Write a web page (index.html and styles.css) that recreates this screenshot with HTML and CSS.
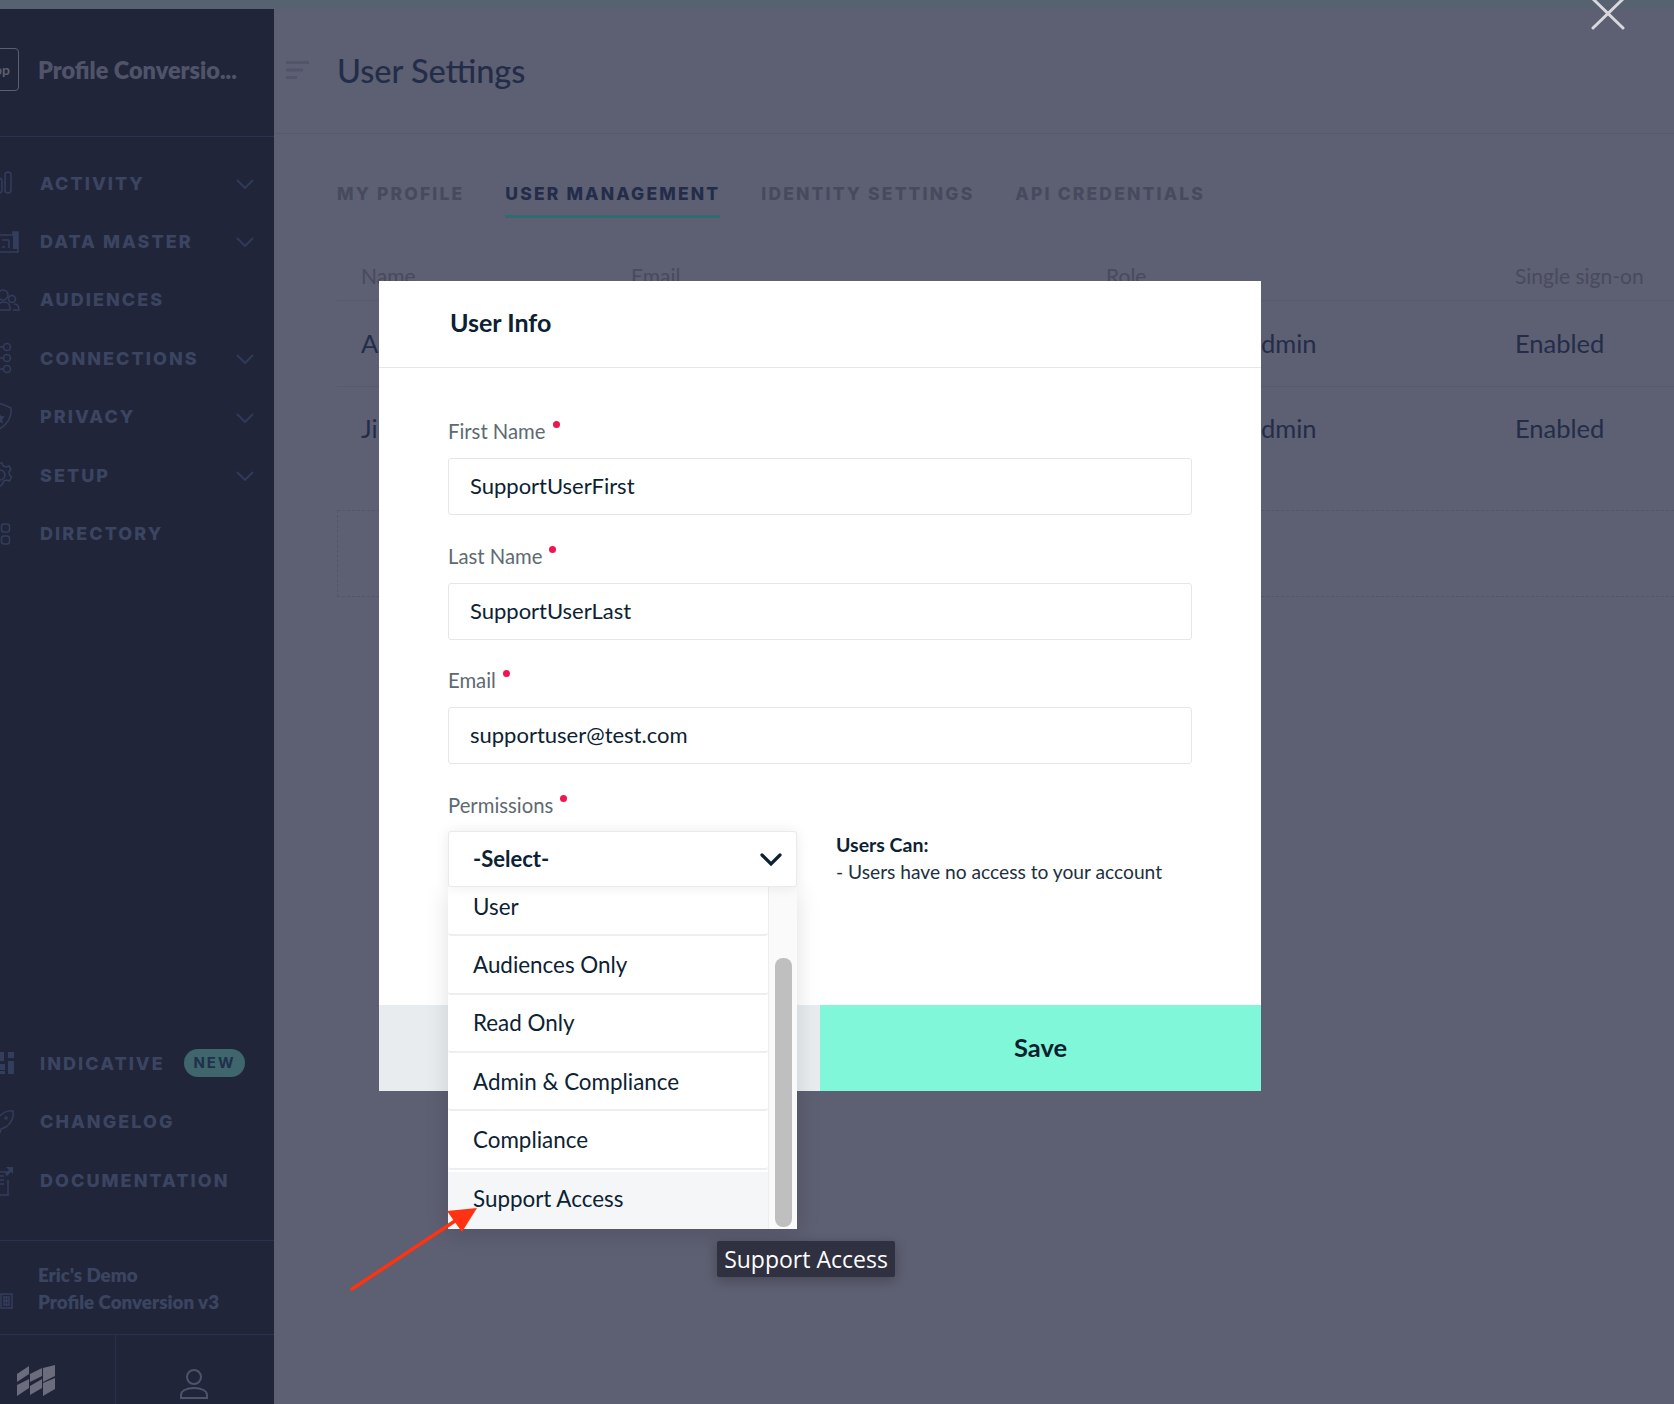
FILE: index.html
```html
<!DOCTYPE html>
<html lang="en">
<head>
<meta charset="utf-8">
<title>User Settings</title>
<link rel="stylesheet" href="styles.css">
</head>
<body>
<div class="strip"></div>
<div class="app">
  <aside class="sidebar">
    <div class="side-head">
      <div class="app-badge">pp</div>
      <div class="app-name">Profile Conversio...</div>
    </div>
    <nav class="nav">
      <div class="nav-item"><span class="ico"><svg width="20" height="24" viewBox="0 0 20 24"><rect x="-4" y="7" width="6" height="15" rx="3"/><rect x="5" y="1" width="6" height="21" rx="3"/></svg></span><span class="nav-label">ACTIVITY</span><svg class="chev" width="18" height="10" viewBox="0 0 18 10"><path d="M1 1l8 8 8-8"/></svg></div>
      <div class="nav-item"><span class="ico"><svg width="20" height="24" viewBox="0 0 20 24"><path d="M-2 5h15V2h5v20H-2z"/><path d="M2 10h7M9 10v6M2 17h3M8 17h2"/><path class="solid" d="M13 2h5v17h-5z"/></svg></span><span class="nav-label">DATA MASTER</span><svg class="chev" width="18" height="10" viewBox="0 0 18 10"><path d="M1 1l8 8 8-8"/></svg></div>
      <div class="nav-item"><span class="ico"><svg width="20" height="24" viewBox="0 0 20 24"><circle cx="3" cy="7" r="5"/><path d="M-3 22v-2c0-4 4-6 7-6s6 2 6 6v2z"/><circle cx="12" cy="11" r="3.500"/><path d="M14 16c3 0 5 2 5 6h-6"/></svg></span><span class="nav-label">AUDIENCES</span></div>
      <div class="nav-item"><span class="ico"><svg width="20" height="32" viewBox="0 0 20 32"><circle cx="7" cy="5" r="3.500"/><circle cx="7" cy="16" r="3.500"/><circle cx="7" cy="27" r="3.500"/><path d="M0 5h3M0 16h3M0 27h3"/></svg></span><span class="nav-label">CONNECTIONS</span><svg class="chev" width="18" height="10" viewBox="0 0 18 10"><path d="M1 1l8 8 8-8"/></svg></div>
      <div class="nav-item"><span class="ico"><svg width="20" height="30" viewBox="0 0 20 30"><path d="M-4 1c5 0 9 2 15 5 1 9-3 17-15 23"/><path class="solid" d="M-1 10l2 4 4 .5-3 3 1 4-4-2z"/></svg></span><span class="nav-label">PRIVACY</span><svg class="chev" width="18" height="10" viewBox="0 0 18 10"><path d="M1 1l8 8 8-8"/></svg></div>
      <div class="nav-item"><span class="ico"><svg width="20" height="26" viewBox="0 0 20 26"><circle cx="0" cy="13" r="5"/><path d="M0 1h2l1 3 3 1 3-1 2 3-2 3 .5 3 2 2-2 4-3-1-3 1-1 3-2 2h-2"/></svg></span><span class="nav-label">SETUP</span><svg class="chev" width="18" height="10" viewBox="0 0 18 10"><path d="M1 1l8 8 8-8"/></svg></div>
      <div class="nav-item"><span class="ico"><svg width="20" height="24" viewBox="0 0 20 24"><rect x="1.500" y="2" width="8" height="8" rx="2.500"/><rect x="1.500" y="14" width="8" height="8" rx="2.500"/></svg></span><span class="nav-label">DIRECTORY</span></div>
    </nav>
    <nav class="nav nav-bottom">
      <div class="nav-item"><span class="ico"><svg width="20" height="24" viewBox="0 0 20 24"><path class="solid" d="M0 1h4v9H0zM8 1h6v6H8zM0 13h5v6H0zM8 10h6v13H8zM0 20h5v3H0z"/></svg></span><span class="nav-label">INDICATIVE</span><span class="new">NEW</span></div>
      <div class="nav-item"><span class="ico"><svg width="20" height="26" viewBox="0 0 20 26"><path d="M-2 9C2 4 8 1 13 2c1 6-2 12-7 16l-5 2-1 4"/><circle cx="6" cy="9" r="1"/></svg></span><span class="nav-label">CHANGELOG</span></div>
      <div class="nav-item"><span class="ico"><svg width="20" height="30" viewBox="0 0 20 30"><path d="M8 6H-2v23H8V14M-1 10h5M-1 14h5M-1 18h5"/><path class="solid" d="M6 1h7v7l-2-2-4 4-2-2 4-4z"/></svg></span><span class="nav-label">DOCUMENTATION</span></div>
    </nav>
    <div class="org">
      <span class="ico"><svg width="14" height="16" viewBox="0 0 14 16"><path d="M1 1h11v14H1zM4 4h5v8H4zM6.500 4v8M4 8h5"/></svg></span>
      <div class="org-text"><div>Eric's Demo</div><div>Profile Conversion v3</div></div>
    </div>
    <div class="side-foot">
      <div class="foot-cell foot-logo"><svg width="38" height="32" viewBox="0 0 38 32"><path d="M0 9l12-8v8L0 17zM13 9l12-6v8l-12 6zM26 3l12-3v11l-12 6zM0 20l12-6v9L0 31zM13 21l12-7v9l-12 7zM26 18l12-5v11l-12 7z"/></svg></div>
      <div class="foot-cell foot-user"><svg width="28" height="30" viewBox="0 0 28 30"><circle cx="14" cy="8" r="7"/><path d="M1 29v-3c0-4 5-7 13-7s13 3 13 7v3z"/></svg></div>
    </div>
  </aside>

  <main class="main">
    <header class="top">
      <svg class="toggle" width="23" height="18" viewBox="0 0 23 18"><path d="M0 1.500h23M0 9h17M0 16.500h11"/></svg>
      <h1 class="title">User Settings</h1>
    </header>
    <div class="tabs">
      <span class="tab">MY PROFILE</span>
      <span class="tab active">USER MANAGEMENT</span>
      <span class="tab">IDENTITY SETTINGS</span>
      <span class="tab">API CREDENTIALS</span>
    </div>
    <div class="table">
      <div class="row head"><span>Name</span><span>Email</span><span>Role</span><span>Single sign-on</span></div>
      <div class="row"><span>A</span><span></span><span class="role">dmin</span><span>Enabled</span></div>
      <div class="row last"><span>Ji</span><span></span><span class="role">dmin</span><span>Enabled</span></div>
    </div>
    <div class="dashed"></div>
  </main>
</div>

<svg class="close" width="36" height="30" viewBox="0 0 36 30"><path d="M1 28L31 -1M31 28L1 -1" transform="translate(2 0)"/></svg>

<section class="modal">
  <div class="modal-head">User Info</div>
  <div class="modal-body">
    <div class="field">
      <label class="label">First Name<i class="req"></i></label>
      <div class="input">SupportUserFirst</div>
    </div>
    <div class="field">
      <label class="label">Last Name<i class="req"></i></label>
      <div class="input">SupportUserLast</div>
    </div>
    <div class="field">
      <label class="label">Email<i class="req"></i></label>
      <div class="input">supportuser@test.com</div>
    </div>
    <div class="field-perm">
      <label class="label">Permissions<i class="req"></i></label>
      <div class="perm-row">
        <div class="select-wrap">
          <div class="select"><span>-Select-</span><svg width="22" height="13" viewBox="0 0 22 13"><path d="M2 2l9 9 9-9"/></svg></div>
          <div class="list">
            <div class="options">
              <div class="opt">User</div>
              <div class="opt">Audiences Only</div>
              <div class="opt">Read Only</div>
              <div class="opt">Admin &amp; Compliance</div>
              <div class="opt">Compliance</div>
              <div class="opt hover">Support Access</div>
            </div>
            <div class="track"><div class="thumb"></div></div>
          </div>
        </div>
        <div class="info">
          <div class="info-title">Users Can:</div>
          <div class="info-text">- Users have no access to your account</div>
        </div>
      </div>
    </div>
  </div>
  <div class="modal-foot">
    <div class="btn cancel"></div>
    <div class="btn save">Save</div>
  </div>
</section>

<div class="tooltip">Support Access</div>
<svg class="arrow" width="130" height="86" viewBox="0 0 130 86"><path class="shaft" d="M2 84L108 14"/><path class="head" d="M127 3L97 6 112 27z"/></svg>
</body>
</html>
```
FILE: styles.css
```css
* { box-sizing: border-box; }
html, body { margin: 0; height: 100%; }
body {
  width: 1674px; height: 1404px; overflow: hidden; position: relative;
  background: #5d5f72; font-family: Lato, "Open Sans", sans-serif; color: #0c2233;
}
.strip { height: 9px; background: #566270; }
.app { display: flex; height: 1395px; }

.sidebar {
  width: 274px; flex: none; background: #212539;
  display: flex; flex-direction: column; color: #3b4562;
}
.side-head {
  height: 128px; flex: none; border-bottom: 1px solid #2c3350;
  display: flex; align-items: center; padding-bottom: 6px; overflow: hidden;
}
.app-badge {
  width: 43px; height: 43px; margin-left: -24px; flex: none;
  border: 1.500px solid #5c5f72; border-radius: 4px; color: #5c5f72;
  display: flex; align-items: center; justify-content: flex-end;
  padding-right: 8px; font-size: 14px; font-weight: 700;
}
.app-name { margin-left: 19px; font-size: 23.500px; font-weight: 800; color: #50546a; white-space: nowrap; }
.nav { padding-top: 17px; }
.nav-bottom { margin-top: auto; padding: 0 0 30px; }
.nav-item { height: 58.400px; display: flex; align-items: center; position: relative; }
.nav-bottom .nav-item { height: 58.800px; }
.ico { width: 40px; flex: none; display: flex; align-items: center; }
.ico svg { fill: none; stroke: #333d5c; stroke-width: 1.500; overflow: hidden; display: block; }
.ico svg .solid { fill: #333d5c; stroke: none; }
.nav-label { font-family: Inter, sans-serif; font-weight: 800; font-size: 18px; letter-spacing: 2.050px; color: #3b4562; white-space: nowrap; }
.chev { position: absolute; left: 236px; top: 25px; fill: none; stroke: #2f3a5c; stroke-width: 2; }
.new {
  position: absolute; left: 184px; top: 15px; width: 61px; height: 28px; border-radius: 14px;
  background: #3e666c; color: #20304a; font: 700 15px Inter, sans-serif; letter-spacing: 2px;
  display: flex; align-items: center; justify-content: center;
}
.org {
  height: 95px; flex: none; border-top: 1px solid #2a3150; border-bottom: 1px solid #2a3150;
  display: flex; align-items: center;
}
.org .ico { width: 38px; padding-top: 26px; }
.org-text { font-size: 18.800px; font-weight: 800; line-height: 27px; color: #3b4562; }
.side-foot { height: 69px; flex: none; display: flex; }
.foot-cell { display: flex; justify-content: center; padding-top: 30px; overflow: hidden; }
.foot-logo { width: 116px; border-right: 1px solid #2a3150; justify-content: flex-start; padding-left: 17px; }
.foot-logo path { fill: #6b6c7c; }
.foot-user { flex: 1; padding-top: 34px; padding-right: 2px; }
.foot-user svg { fill: none; stroke: #4d536c; stroke-width: 2; }

.main { flex: 1; min-width: 0; }
.top {
  height: 125px; border-bottom: 1px solid #585a6c;
  display: flex; align-items: center; padding-left: 12px; padding-bottom: 2px;
}
.toggle { fill: none; stroke: #52556a; stroke-width: 3; flex: none; }
.title { margin: 0 0 0 28px; font-size: 32.500px; font-weight: 500; color: #232d49; }
.tabs { display: flex; gap: 41px; padding: 50px 0 0 63px; }
.tab {
  font-family: Inter, sans-serif; font-weight: 800; font-size: 17.500px; letter-spacing: 2.150px; color: #474a5e;
  height: 34px; line-height: 20px; padding-bottom: 11px; white-space: nowrap; border-bottom: 3px solid transparent;
}
.tab.active { color: #232d49; border-bottom-color: #2f6b70; }
.table { margin: 43px 0 0 63px; }
.row {
  display: grid; grid-template-columns: 270px 475px 409px 1fr;
  height: 85.500px; align-items: center; padding: 0 0 1px 24px;
  font-size: 25.500px; color: #232d49; border-bottom: 1px solid #585a6c; white-space: nowrap;
}
.row.head { height: 40px; font-size: 21px; color: #484a5d; padding-bottom: 10px; }
.row.last { border-bottom: none; padding-bottom: 3px; }
.role { padding-left: 155px; }
.dashed {
  margin: 38px 0 0 63px; height: 87px;
  border: 1px dashed #53556a; border-right: none;
}

.close { position: absolute; left: 1590px; top: 0; fill: none; stroke: #d9d9dd; stroke-width: 3; stroke-linecap: round; }

.modal {
  position: absolute; z-index: 1; left: 379px; top: 281px; width: 882px; height: 810px;
  background: #fff; display: flex; flex-direction: column;
}
.modal-head {
  height: 87px; flex: none; border-bottom: 1px solid #e6e8ea;
  display: flex; align-items: center; padding: 0 0 4px 71px;
  font-size: 25px; font-weight: 700; color: #0c2233;
}
.modal-body { flex: 1; padding: 53px 69px 0; }
.field { margin-bottom: 30.700px; }
.label { display: block; height: 24px; line-height: 20px; margin-bottom: 13px; font-size: 20.300px; color: #5d6a72; }
.req { display: inline-block; width: 7px; height: 7px; border-radius: 50%; background: #f0144f; margin-left: 7px; position: relative; top: -11px; }
.input {
  height: 57px; border: 1px solid #e4e6e8; border-radius: 3px; padding: 0 0 2px 21px;
  display: flex; align-items: center; font-size: 22px; color: #0c2233;
}
.field-perm .label { margin-bottom: 12px; }
.perm-row { display: flex; align-items: flex-start; }
.select-wrap { width: 349px; flex: none; position: relative; z-index: 2; }
.select {
  height: 56px; background: #fff; border: 1px solid #e8eaec; border-radius: 3px;
  box-shadow: 0 0 14px rgba(0,0,0,.08); position: relative; z-index: 1;
  display: flex; align-items: center; justify-content: space-between;
  padding: 0 14px 2px 24px; font-size: 22px; font-weight: 700; color: #0c2233;
}
.select svg { margin-top: 2px; fill: none; stroke: #0c2233; stroke-width: 3.200; stroke-linecap: round; }
.list {
  position: absolute; left: 0; top: 56px; width: 349px; height: 342px; overflow: hidden;
  background: #fff; box-shadow: 0 4px 22px rgba(0,0,0,.13); display: flex;
}
.options { width: 320px; flex: none; margin-top: -9px; }
.opt {
  height: 58.300px; padding-left: 25px; display: flex; align-items: center; font-size: 22.400px; color: #0c2233;
  border-bottom: 2px solid #eceef0; border-radius: 0 0 3px 3px;
}
.opt.hover { background: #f5f6f7; border-bottom: none; height: 60px; margin-top: 2px; padding-bottom: 7px; }
.track { flex: 1; background: #fafafa; border-left: 1px solid #eceded; padding: 71px 5px 0 6px; }
.thumb { height: 269px; background: #bfbfbf; border-radius: 8px; }
.info { margin-left: 39px; padding-top: 1px; }
.info-title { font-size: 19.500px; font-weight: 700; line-height: 26px; color: #0c2233; }
.info-text { font-size: 19.200px; line-height: 28px; color: #1c3040; white-space: nowrap; }
.modal-foot { height: 86px; flex: none; display: flex; }
.btn { flex: 1; display: flex; align-items: center; justify-content: center; padding-bottom: 2px; font-size: 25.500px; font-weight: 700; }
.cancel { background: #e9ecef; color: #5d6a72; }
.save { background: #80f7d8; color: #0c1f2e; }

.tooltip {
  position: absolute; z-index: 2; left: 717px; top: 1241px; width: 178px; height: 36px; border-radius: 2px;
  background: #2f3040; color: #fff; font: 23px "Open Sans", sans-serif;
  display: flex; align-items: center; justify-content: center; white-space: nowrap;
  box-shadow: 0 3px 12px rgba(0,0,0,.25);
}
.arrow { position: absolute; z-index: 3; left: 350px; top: 1205px; }
.arrow .shaft { fill: none; stroke: #ff3311; stroke-width: 3.500; stroke-linecap: round; }
.arrow .head { fill: #ff3311; }
```
